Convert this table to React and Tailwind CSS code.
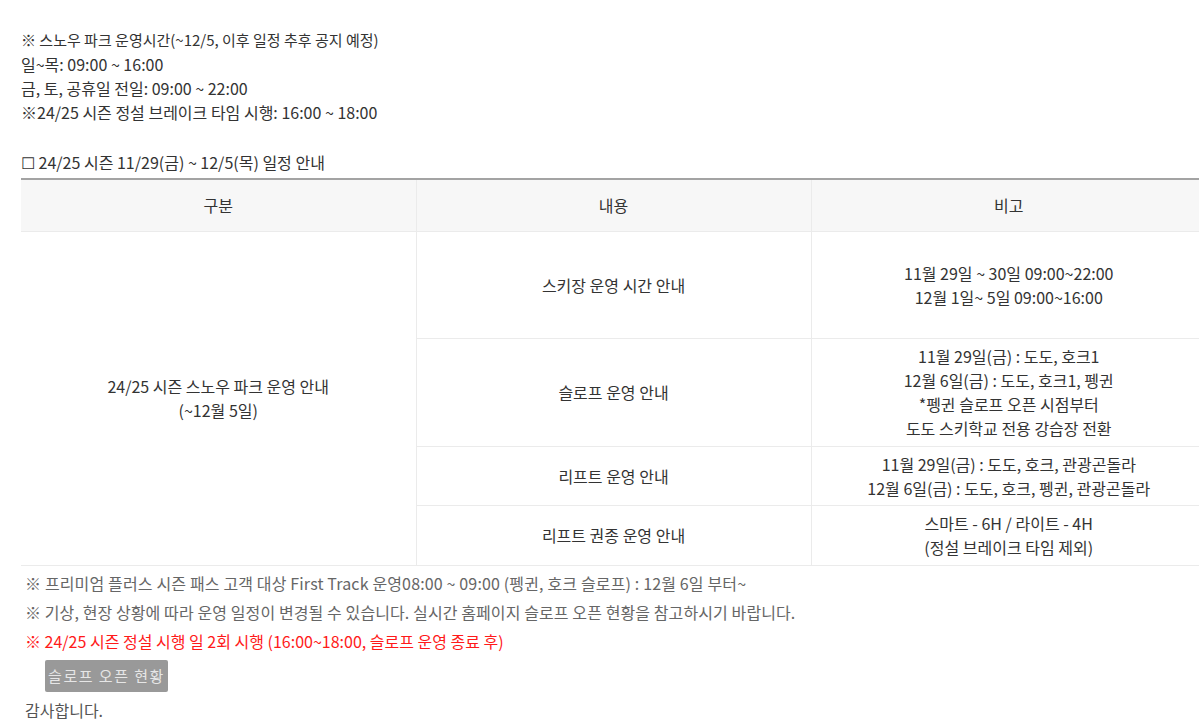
const FONT = { fontFamily: '"Noto Sans CJK KR", "Noto Sans", sans-serif' }

const rows = [
  {
    content: '스키장 운영 시간 안내',
    note: ['11월 29일 ~ 30일 09:00~22:00', '12월 1일~ 5일 09:00~16:00'],
    h: 'h-[107px]',
  },
  {
    content: '슬로프 운영 안내',
    note: ['11월 29일(금) : 도도, 호크1', '12월 6일(금) : 도도, 호크1, 펭귄', '*펭귄 슬로프 오픈 시점부터', '도도 스키학교 전용 강습장 전환'],
    h: 'h-[108px]',
  },
  {
    content: '리프트 운영 안내',
    note: ['11월 29일(금) : 도도, 호크, 관광곤돌라', '12월 6일(금) : 도도, 호크, 펭귄, 관광곤돌라'],
    h: 'h-[59px]',
  },
  {
    content: '리프트 권종 운영 안내',
    note: ['스마트 - 6H / 라이트 - 4H', '(정설 브레이크 타임 제외)'],
    h: 'h-[60px]',
  },
]

export default function App() {
  return (
    <div className="w-[1199px] h-[723px] overflow-hidden bg-white text-[16px] leading-6 text-[#333]" style={FONT}>
      <div className="pl-[21px] pt-[28px]">
        <p className="text-[15px]">※ 스노우 파크 운영시간(~12/5, 이후 일정 추후 공지 예정)</p>
        <p>일~목: 09:00 ~ 16:00</p>
        <p>금, 토, 공휴일 전일: 09:00 ~ 22:00</p>
        <p>※24/25 시즌 정설 브레이크 타임 시행: 16:00 ~ 18:00</p>
        <p>&nbsp;</p>
        <p className="mt-[2px]">☐ 24/25 시즌 11/29(금) ~ 12/5(목) 일정 안내</p>

        <table className="mt-[4px] w-[1185px] table-fixed border-collapse border-t-2 border-t-[#a3a3a3] text-center">
          <thead>
            <tr className="h-[52px] bg-[#f7f7f7]">
              <th className="w-[395px] border-b border-r border-[#ebebeb] font-normal">구분</th>
              <th className="w-[395px] border-b border-r border-[#ebebeb] font-normal">내용</th>
              <th className="border-b border-[#ebebeb] font-normal">비고</th>
            </tr>
          </thead>
          <tbody>
            {rows.map((r, i) => (
              <tr key={i} className={r.h}>
                {i === 0 && (
                  <td rowSpan={4} className="border-b border-r border-[#ebebeb] align-middle">
                    <p>24/25 시즌 스노우 파크 운영 안내</p>
                    <p>(~12월 5일)</p>
                  </td>
                )}
                <td className="border-b border-r border-[#ebebeb] align-middle">{r.content}</td>
                <td className="border-b border-[#ebebeb] align-middle py-[5px]">
                  {r.note.map((n, j) => (
                    <p key={j} className="leading-6">{n}</p>
                  ))}
                </td>
              </tr>
            ))}
          </tbody>
        </table>

        <div className="pl-[4px] text-[#666]">
          <p className="mt-[3px] leading-[29px] tracking-[0.15px]">※ 프리미엄 플러스 시즌 패스 고객 대상 First Track 운영08:00 ~ 09:00 (펭귄, 호크 슬로프) : 12월 6일 부터~</p>
          <p className="leading-[29px] tracking-[0.1px]">※ 기상, 현장 상황에 따라 운영 일정이 변경될 수 있습니다. 실시간 홈페이지 슬로프 오픈 현황을 참고하시기 바랍니다.</p>
          <p className="leading-[29px] text-[#ff1a1a]">※ 24/25 시즌 정설 시행 일 2회 시행 (16:00~18:00, 슬로프 운영 종료 후)</p>
          <div className="pl-[20px] pt-[4px]">
            <button className="h-[32px] w-[123px] rounded-[2px] bg-[#999] text-[15px] tracking-[1.5px] text-[#e6e6e6]">
              슬로프 오픈 현황
            </button>
          </div>
          <p className="mt-[6px] text-[#555]">감사합니다.</p>
        </div>
      </div>
    </div>
  )
}
